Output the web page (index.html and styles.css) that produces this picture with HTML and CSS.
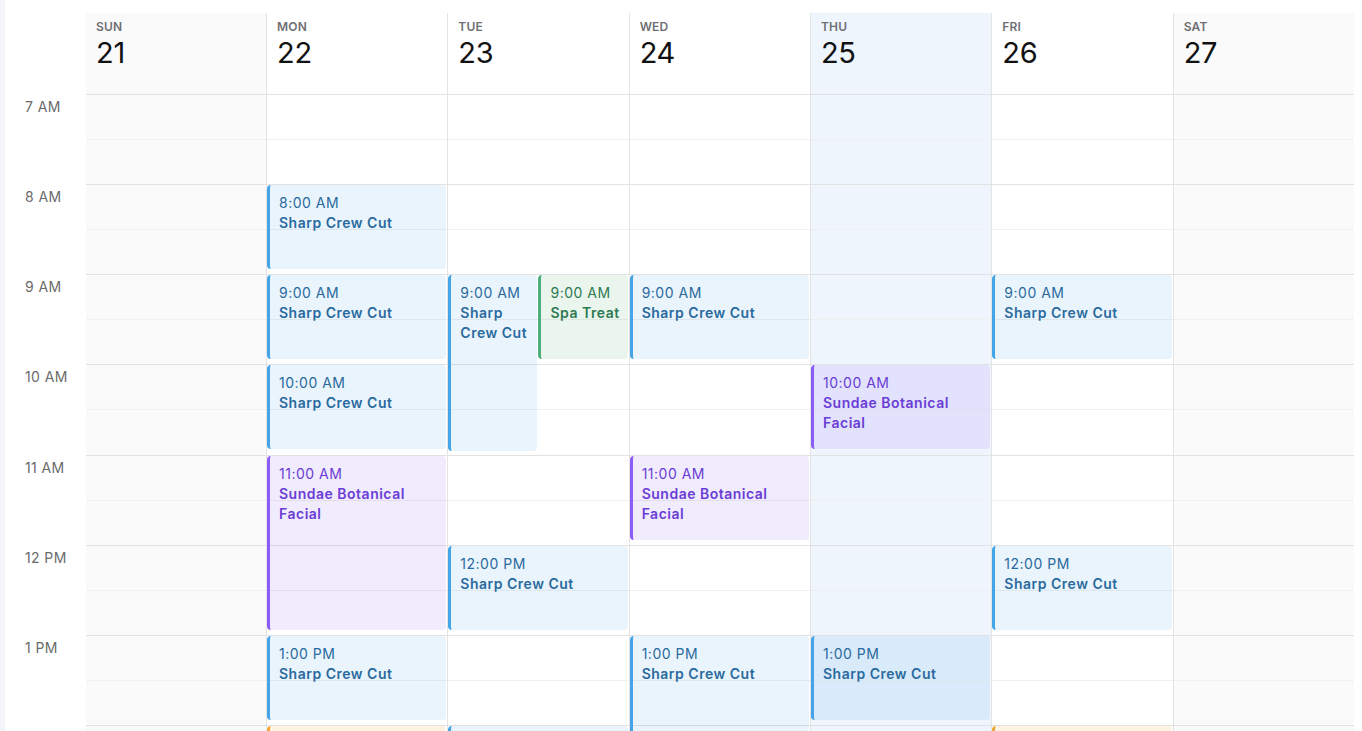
FILE: index.html
```html
<!DOCTYPE html>
<html lang="en">
<head>
<meta charset="utf-8">
<title>Week calendar</title>
<link rel="stylesheet" href="styles.css">
</head>
<body>
<div class="app">
  <aside class="rail"></aside>
  <main class="calendar">
    <div class="corner"></div>
    <div class="head weekend first"><span class="dname">SUN</span><span class="dnum">21</span></div>
    <div class="head"><span class="dname">MON</span><span class="dnum">22</span></div>
    <div class="head"><span class="dname">TUE</span><span class="dnum">23</span></div>
    <div class="head"><span class="dname">WED</span><span class="dnum">24</span></div>
    <div class="head today"><span class="dname">THU</span><span class="dnum">25</span></div>
    <div class="head"><span class="dname">FRI</span><span class="dnum">26</span></div>
    <div class="head weekend"><span class="dname">SAT</span><span class="dnum">27</span></div>

    <div class="gutter">
      <div class="tlabel">7 AM</div>
      <div class="tlabel">8 AM</div>
      <div class="tlabel">9 AM</div>
      <div class="tlabel">10 AM</div>
      <div class="tlabel">11 AM</div>
      <div class="tlabel">12 PM</div>
      <div class="tlabel">1 PM</div>
      <div class="tlabel">2 PM</div>
    </div>

    <div class="day weekend first">
      <div class="slot"></div><div class="slot"></div><div class="slot"></div><div class="slot"></div>
      <div class="slot"></div><div class="slot"></div><div class="slot"></div><div class="slot"></div>
    </div>

    <div class="day">
      <div class="slot"></div><div class="slot"></div><div class="slot"></div><div class="slot"></div>
      <div class="slot"></div><div class="slot"></div><div class="slot"></div><div class="slot"></div>
      <div class="event blue" style="top:90.15px;height:84px"><div class="time">8:00 AM</div><div class="title">Sharp Crew Cut</div></div>
      <div class="event blue" style="top:180.3px;height:84px"><div class="time">9:00 AM</div><div class="title">Sharp Crew Cut</div></div>
      <div class="event blue" style="top:270.45px;height:84px"><div class="time">10:00 AM</div><div class="title">Sharp Crew Cut</div></div>
      <div class="event purple" style="top:360.6px;height:174px"><div class="time">11:00 AM</div><div class="title">Sundae Botanical Facial</div></div>
      <div class="event blue" style="top:540.9px;height:84px"><div class="time">1:00 PM</div><div class="title">Sharp Crew Cut</div></div>
      <div class="event orange" style="top:631.05px;height:84px"><div class="time">2:00 PM</div><div class="title">Classic Manicure</div></div>
    </div>

    <div class="day">
      <div class="slot"></div><div class="slot"></div><div class="slot"></div><div class="slot"></div>
      <div class="slot"></div><div class="slot"></div><div class="slot"></div><div class="slot"></div>
      <div class="event blue half-left" style="top:180.3px;height:176px"><div class="time">9:00 AM</div><div class="title">Sharp Crew Cut</div></div>
      <div class="event green half-right" style="top:180.3px;height:84px"><div class="time">9:00 AM</div><div class="title">Spa Treat</div></div>
      <div class="event blue" style="top:450.75px;height:84px"><div class="time">12:00 PM</div><div class="title">Sharp Crew Cut</div></div>
      <div class="event blue" style="top:631.05px;height:84px"><div class="time">2:00 PM</div><div class="title">Sharp Crew Cut</div></div>
    </div>

    <div class="day">
      <div class="slot"></div><div class="slot"></div><div class="slot"></div><div class="slot"></div>
      <div class="slot"></div><div class="slot"></div><div class="slot"></div><div class="slot"></div>
      <div class="event blue" style="top:180.3px;height:84px"><div class="time">9:00 AM</div><div class="title">Sharp Crew Cut</div></div>
      <div class="event purple" style="top:360.6px;height:84px"><div class="time">11:00 AM</div><div class="title">Sundae Botanical Facial</div></div>
      <div class="event blue" style="top:540.9px;height:174px"><div class="time">1:00 PM</div><div class="title">Sharp Crew Cut</div></div>
    </div>

    <div class="day today">
      <div class="slot"></div><div class="slot"></div><div class="slot"></div><div class="slot"></div>
      <div class="slot"></div><div class="slot"></div><div class="slot"></div><div class="slot"></div>
      <div class="event purple" style="top:270.45px;height:84px"><div class="time">10:00 AM</div><div class="title">Sundae Botanical Facial</div></div>
      <div class="event blue" style="top:540.9px;height:84px"><div class="time">1:00 PM</div><div class="title">Sharp Crew Cut</div></div>
    </div>

    <div class="day">
      <div class="slot"></div><div class="slot"></div><div class="slot"></div><div class="slot"></div>
      <div class="slot"></div><div class="slot"></div><div class="slot"></div><div class="slot"></div>
      <div class="event blue" style="top:180.3px;height:84px"><div class="time">9:00 AM</div><div class="title">Sharp Crew Cut</div></div>
      <div class="event blue" style="top:450.75px;height:84px"><div class="time">12:00 PM</div><div class="title">Sharp Crew Cut</div></div>
      <div class="event orange" style="top:631.05px;height:84px"><div class="time">2:00 PM</div><div class="title">Classic Manicure</div></div>
    </div>

    <div class="day weekend">
      <div class="slot"></div><div class="slot"></div><div class="slot"></div><div class="slot"></div>
      <div class="slot"></div><div class="slot"></div><div class="slot"></div><div class="slot"></div>
    </div>
  </main>
</div>
</body>
</html>
```

FILE: styles.css
```css
* { box-sizing: border-box; }

html, body {
  margin: 0;
  height: 100%;
  overflow: hidden;
}

body {
  font-family: Inter, "Noto Sans", "Liberation Sans", sans-serif;
  color: #111111;
  background: #ffffff;
}

.app {
  display: flex;
  height: 100vh;
  overflow: hidden;
  padding-right: 8px;
}

.rail {
  width: 5px;
  flex: none;
  background: #f3f5f9;
}

.calendar {
  flex: 1;
  min-width: 0;
  display: grid;
  grid-template-columns: 81px 180px repeat(6, 1fr);
  grid-template-rows: 82px auto;
  align-content: start;
  padding-top: 13px;
}

.corner { background: #ffffff; }

.head {
  border-left: 1px solid #e4e4e4;
  border-bottom: 1px solid #e2e2e2;
  padding: 6px 10px 0;
  display: flex;
  flex-direction: column;
}

.day {
  position: relative;
  border-left: 1px solid #e4e4e4;
}

.first { border-left: 0; }

.weekend { background: #fafafa; }
.today { background: #eef5fd; }

.dname {
  font-size: 12px;
  line-height: 16px;
  font-weight: 600;
  color: #6f6f74;
  letter-spacing: 0.2px;
}

.dnum {
  margin-top: 0;
  font-size: 29px;
  line-height: 36px;
  font-weight: 400;
  color: #111111;
  letter-spacing: -0.3px;
}

.tlabel {
  height: 90.15px;
  padding: 2px 0 0 20px;
  font-size: 14px;
  line-height: 20px;
  color: #6b6b6b;
  letter-spacing: 0.4px;
}

.slot {
  height: 90.15px;
  border-bottom: 1px solid #e2e2e2;
  background: linear-gradient(#f0f0f0, #f0f0f0) 0 44px / 100% 1px no-repeat;
}

.event {
  position: absolute;
  left: 0;
  right: 1px;
  border-left: 3px solid;
  border-radius: 4px;
  padding: 8px 8px 0 9px;
  font-size: 14px;
  line-height: 20px;
  letter-spacing: 0.5px;
  overflow: hidden;
}

.event .time { font-weight: 400; }
.event .title { font-weight: 600; }

.half-left { right: auto; width: calc(50% - 1px); }
.half-right { left: 50%; }

.blue {
  background: rgba(59, 155, 230, 0.11);
  border-color: #45a4e8;
  color: #2a6a9e;
}

.purple {
  background: rgba(139, 92, 246, 0.12);
  border-color: #8b5cf6;
  color: #6a3dd5;
}

.green {
  background: rgba(72, 170, 110, 0.12);
  border-color: #4caf7d;
  color: #2e7a52;
}

.orange {
  background: rgba(245, 158, 11, 0.12);
  border-color: #f2a431;
  color: #a4621a;
}
```
